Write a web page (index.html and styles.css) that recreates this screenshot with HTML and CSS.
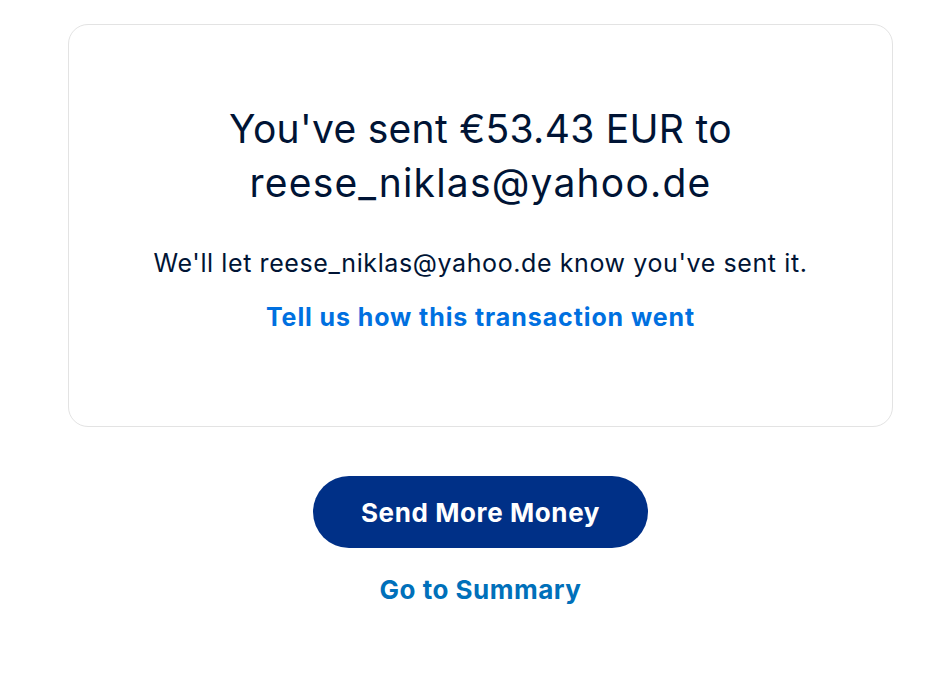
FILE: index.html
```html
<!DOCTYPE html>
<html>
<head>
<meta charset="utf-8">
<link rel="stylesheet" href="styles.css">
</head>
<body>
<main class="page">
  <section class="card">
    <h1 class="title">You've sent €53.43 EUR to<br><span class="addr">reese_niklas@yahoo.de</span></h1>
    <p class="note">We'll let reese_niklas@yahoo.de know you've sent it.</p>
    <a class="feedback" href="#">Tell us how this transaction went</a>
  </section>
  <div class="actions">
    <button class="primary">Send More Money</button>
    <a class="secondary" href="#">Go to Summary</a>
  </div>
</main>
</body>
</html>
```

FILE: styles.css
```css
html, body {
  margin: 0;
  padding: 0;
  background: #ffffff;
}
body {
  font-family: Inter, "Liberation Sans", Arial, sans-serif;
  color: #001435;
}
.page {
  padding: 24px 57px 0 68px;
  display: flex;
  flex-direction: column;
  align-items: stretch;
}
.card {
  border: 1px solid #e3e3e3;
  border-radius: 20px;
  height: 403px;
  box-sizing: border-box;
  padding-top: 77px;
  display: flex;
  flex-direction: column;
  align-items: center;
  text-align: center;
}
.title {
  margin: 0;
  font-size: 39px;
  font-weight: 400;
  line-height: 54px;
  letter-spacing: 0.3px;
}
.addr {
  letter-spacing: 1.2px;
}
.note {
  margin: 38px 0 0;
  font-size: 25px;
  line-height: 30px;
  letter-spacing: 0.6px;
}
.feedback {
  margin-top: 24px;
  font-size: 25px;
  font-weight: 700;
  color: #0070e0;
  text-decoration: none;
  line-height: 30px;
  letter-spacing: 0.9px;
}
.actions {
  display: flex;
  flex-direction: column;
  align-items: center;
  margin-top: 49px;
}
.primary {
  width: 335px;
  height: 72px;
  border: none;
  border-radius: 36px;
  background: #003087;
  color: #ffffff;
  font-family: Inter, "Liberation Sans", Arial, sans-serif;
  font-size: 26px;
  font-weight: 700;
  letter-spacing: 0.6px;
}
.secondary {
  margin-top: 26px;
  font-size: 26px;
  font-weight: 700;
  color: #0070ba;
  text-decoration: none;
  line-height: 32px;
  letter-spacing: 0.5px;
}
```
